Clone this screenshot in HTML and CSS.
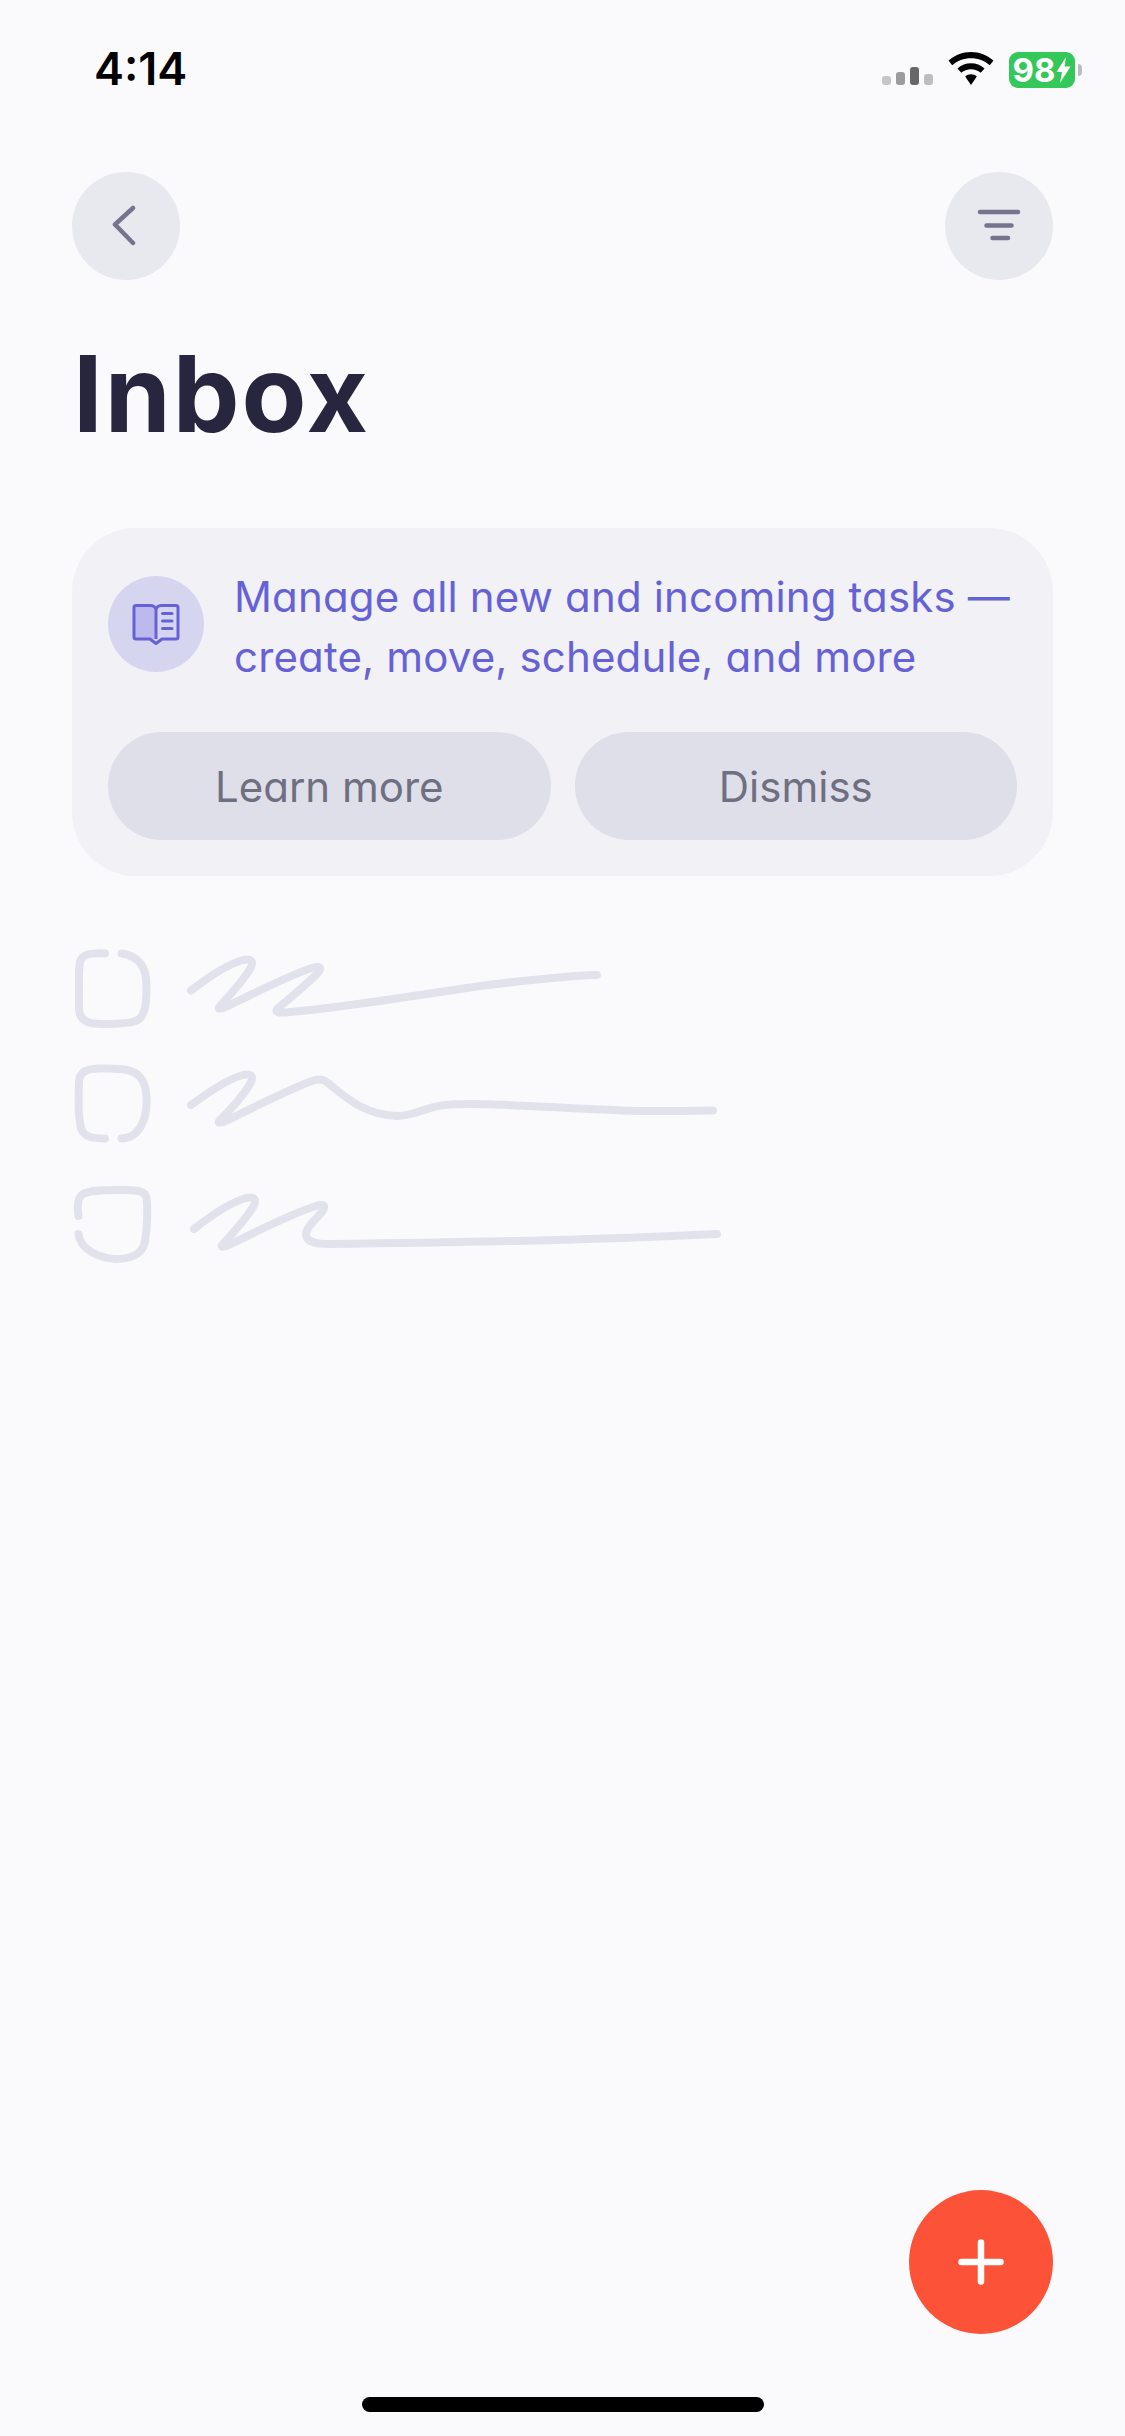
FILE: index.html
```html
<!DOCTYPE html>
<html lang="en">
<head>
<meta charset="utf-8">
<title>Inbox</title>
<link rel="stylesheet" href="styles.css">
</head>
<body>
<div class="screen">
  <div class="status">
    <span class="time">4:14</span>
    <div class="status-right">
      <div class="signal"><i class="s1"></i><i class="s2"></i><i class="s3"></i><i class="s4"></i></div>
      <svg class="wifi" width="46" height="33" viewBox="0 0 46 33"><path d="M23 0C14.500 0 6.700 3.300 0.500 8.600L4.200 13.200C9.300 8.800 15.900 6.200 23 6.200C30.100 6.200 36.700 8.800 41.800 13.200L45.500 8.600C39.300 3.300 31.500 0 23 0ZM23 11.300C18 11.300 13.200 13.100 9.400 16.400L13.300 20.800C15.900 18.500 19.300 17.300 23 17.300C26.700 17.300 30.100 18.500 32.700 20.800L36.600 16.400C32.800 13.100 28 11.300 23 11.300ZM23 22.300C20.800 22.300 18.800 23.100 17.200 24.500L23 33L28.800 24.500C27.200 23.100 25.200 22.300 23 22.300Z" fill="#000"/></svg>
      <div class="battery">
        <div class="battery-body"><span>98</span><svg width="15" height="26" viewBox="0 0 15 26"><path d="M10 0L0.500 15H6L4 26L14.500 9.500H8.500Z" fill="#fff"/></svg></div>
        <div class="battery-nub"></div>
      </div>
    </div>
  </div>

  <div class="nav">
    <button class="round-btn"><svg class="chevron" width="24" height="42" viewBox="0 0 24 42"><path d="M21 3L3 19.500L21 38" fill="none" stroke="#74748c" stroke-width="4.500" stroke-linecap="round" stroke-linejoin="round"/></svg></button>
    <button class="round-btn"><svg width="44" height="34" viewBox="0 0 44 34"><path d="M3 3H41M9.500 16.500H34.500M15.500 29H31" fill="none" stroke="#74748c" stroke-width="4.500" stroke-linecap="round"/></svg></button>
  </div>

  <h1 class="title">Inbox</h1>

  <section class="card">
    <div class="card-top">
      <div class="card-icon">
        <svg width="48" height="42" viewBox="0 0 48 42">
          <path d="M2 2.500H19C21.500 2.500 24 4.500 24 7V36H4C2.800 36 2 35.200 2 34Z" fill="#bcb9ec"/>
          <path d="M24 36L24 7C24 4.500 26.500 2.500 29 2.500H44C45.200 2.500 46 3.300 46 4.500V34C46 35.200 45.200 36 44 36H30L24 40.500L18 36H4C2.800 36 2 35.200 2 34V4.500C2 3.300 2.800 2.500 4 2.500H19C21.500 2.500 24 4.500 24 7" fill="none" stroke="#6662d6" stroke-width="3" stroke-linejoin="round"/>
          <path d="M30.500 10.500H40M30.500 18H40M30.500 25.500H40" fill="none" stroke="#6662d6" stroke-width="3" stroke-linecap="round"/>
        </svg>
      </div>
      <p class="card-text">Manage all new and incoming tasks — create, move, schedule, and more</p>
    </div>
    <div class="card-actions">
      <button class="pill">Learn more</button>
      <button class="pill">Dismiss</button>
    </div>
  </section>

  <svg class="sketch" width="660" height="330" viewBox="72 940 660 330" fill="none" stroke="#e2e2ec" stroke-width="8" stroke-linecap="round" stroke-linejoin="round">
    <path d="M105 953.500C96 953 86 953 82 958C78 963 79 975 79 990C79 1006 78 1013 82 1018C87 1024 96 1024 105 1024C120 1024 132 1023 138 1020C146 1015 146.500 1000 146.500 985C146.500 970 141 956 121.500 953.500"/>
    <path d="M191 990.500C205 980 225 965 243 960C252 958 254 962 250 969C243 981 230 995 220 1006C216 1010 222 1009 228 1006C250 995 290 975 312 968C322 965 322 969 316 975C303 987 288 1000 278 1008C273 1013 280 1013 290 1012C340 1008 420 995 480 986C520 981 565 976 597 975"/>
    <path d="M105 1138.500C92 1138.500 84 1137 81 1128C78.500 1118 78.500 1095 79 1082C79.500 1072 86 1068.500 100 1068.500C115 1068.500 130 1068 138 1075C146 1082 147 1095 146.500 1105C146 1118 140 1138 121.500 1138.500"/>
    <path d="M191 1105C205 1095 225 1080 243 1075C252 1073 254 1077 250 1084C243 1096 230 1110 220 1120C216 1124 222 1123 228 1120C250 1109 290 1089 312 1081C322 1077 326 1081 334 1088C350 1101 368 1115 397 1116C415 1116 425 1107 445 1105C480 1101 560 1109 640 1111C670 1111.500 695 1110.500 713 1110.500"/>
    <path d="M78.500 1216C77 1205 77.500 1197 83 1194C90 1190 105 1190 120 1190C135 1190 145 1190 146.500 1198C148 1210 147 1235 144 1245C140 1256 128 1259 115 1259C100 1258 80 1250 78.500 1234"/>
    <path d="M194 1229C208 1218 228 1203 246 1198C255 1196 257 1200 253 1207C246 1219 233 1233 223 1244C219 1248 225 1247 231 1244C253 1233 293 1213 316 1206C325 1203 326 1206 322 1212C313 1222 306 1228 306 1234C306 1242 315 1244 330 1244C420 1243 600 1240 717 1234"/>
  </svg>

  <button class="fab"><svg width="46" height="46" viewBox="0 0 46 46"><path d="M23 3.500V42.500M3.500 23H42.500" fill="none" stroke="#fff" stroke-width="6.500" stroke-linecap="round"/></svg></button>
  <div class="home-indicator"></div>
</div>
</body>
</html>
```

FILE: styles.css
```css
* { box-sizing: border-box; }
html, body { margin: 0; padding: 0; }
body { background: #fafafd; font-family: "Inter", "Liberation Sans", sans-serif; }
button { border: 0; padding: 0; font: inherit; }

.screen {
  position: relative;
  width: 1125px;
  height: 2436px;
  overflow: hidden;
  padding: 0 72px;
  background: #fafafd;
}

.status {
  display: flex;
  justify-content: space-between;
  align-items: flex-start;
  height: 172px;
  margin: 0 -29px 0 -72px;
  padding: 43px 0 0 94px;
}
.time {
  font-size: 45px;
  line-height: 52px;
  font-weight: 600;
  color: #000;
}
.status-right { display: flex; align-items: flex-start; padding-top: 9px; }
.signal { display: flex; align-items: flex-end; gap: 5px; height: 33px; margin-right: 15px; }
.signal i { display: block; width: 9px; border-radius: 3px; }
.s1 { height: 9px; background: #c6c6c8; }
.s2 { height: 13px; background: #9c9c9e; }
.s3 { height: 18px; background: #67676a; }
.s4 { height: 11px; background: #bdbdc0; }
.wifi { margin-right: 15px; }
.battery { display: flex; align-items: center; gap: 3px; }
.battery-body {
  display: flex;
  align-items: center;
  justify-content: center;
  gap: 1px;
  width: 66px;
  height: 36px;
  border-radius: 9px;
  background: #34c759;
  color: #fff;
  font-size: 33px;
  font-weight: 700;
  line-height: 36px;
}
.battery-nub { width: 4px; height: 12px; border-radius: 0 4px 4px 0; background: #bcbcbe; }

.nav { display: flex; justify-content: space-between; }
.round-btn {
  display: flex;
  align-items: center;
  justify-content: center;
  width: 108px;
  height: 108px;
  border-radius: 50%;
  background: #e8e8ef;
}
.chevron { margin-right: 5px; }

.title {
  margin: 51px 0 71px;
  padding-left: 1px;
  font-size: 106px;
  line-height: 126px;
  font-weight: 650;
  letter-spacing: 2px;
  color: #28263f;
}

.card {
  padding: 36px 36px 36px;
  height: 348px;
  border-radius: 64px;
  background: #f1f1f6;
}
.card-top { display: flex; align-items: flex-start; gap: 30px; }
.card-icon {
  flex: none;
  display: flex;
  align-items: center;
  justify-content: center;
  width: 96px;
  height: 96px;
  margin-top: 12px;
  border-radius: 50%;
  background: #d5d5f0;
}
.card-text {
  margin: 3px 0 0;
  font-size: 42px;
  line-height: 60px;
  letter-spacing: 0.15px;
  color: #6662d6;
  font-feature-settings: "cv11" 1;
}
.card-actions { display: flex; gap: 24px; margin-top: 45px; }
.pill {
  flex: 1;
  height: 108px;
  border-radius: 54px;
  background: #dfdfea;
  color: #6f6f82;
  font-size: 42px;
  font-feature-settings: "cv11" 1;
}

.sketch { display: block; margin-top: 64px; }

.fab {
  position: absolute;
  left: 909px;
  top: 2190px;
  display: flex;
  align-items: center;
  justify-content: center;
  width: 144px;
  height: 144px;
  border-radius: 50%;
  background: #fc5238;
}
.home-indicator {
  position: absolute;
  left: 362px;
  top: 2397px;
  width: 402px;
  height: 15px;
  border-radius: 8px;
  background: #000;
}
```
